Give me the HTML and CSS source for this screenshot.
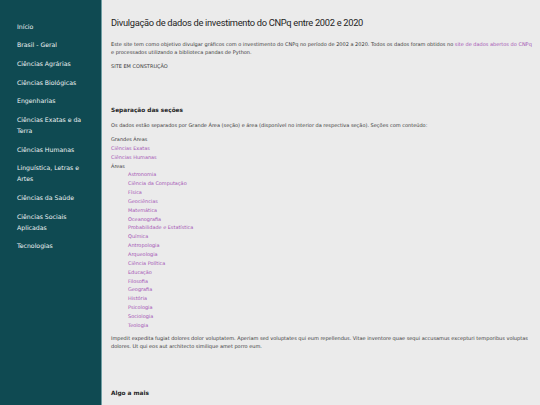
FILE: index.html
```html
<!DOCTYPE html>
<html lang="pt-BR">
<head>
<meta charset="utf-8">
<title>CNPq</title>
<link rel="stylesheet" href="styles.css">
</head>
<body>
<aside class="sidebar">
  <ul class="nav">
    <li>Início</li>
    <li>Brasil - Geral</li>
    <li>Ciências Agrárias</li>
    <li>Ciências Biológicas</li>
    <li>Engenharias</li>
    <li>Ciências Exatas e da Terra</li>
    <li>Ciências Humanas</li>
    <li>Linguística, Letras e Artes</li>
    <li>Ciências da Saúde</li>
    <li>Ciências Sociais Aplicadas</li>
    <li>Tecnologias</li>
  </ul>
</aside>
<main class="content">
  <h1 class="title">Divulgação de dados de investimento do CNPq entre 2002 e 2020</h1>
  <p class="text">Este site tem como objetivo divulgar gráficos com o investimento do CNPq no período de 2002 a 2020. Todos os dados foram obtidos no <a class="link nowrap" href="#">site de dados abertos do CNPq</a><br>e processados utilizando a biblioteca pandas de Python.</p>
  <p class="text">SITE EM CONSTRUÇÃO</p>

  <h2 class="section-title">Separação das seções</h2>
  <p class="text">Os dados estão separados por Grande Área (seção) e área (disponível no interior da respectiva seção). Seções com conteúdo:</p>
  <ul class="tree">
    <li class="tree-head">Grandes Áreas</li>
    <li><a class="link" href="#">Ciências Exatas</a></li>
    <li><a class="link" href="#">Ciências Humanas</a></li>
    <li class="tree-head">Áreas
      <ul class="subtree">
        <li><a class="link" href="#">Astronomia</a></li>
        <li><a class="link" href="#">Ciência da Computação</a></li>
        <li><a class="link" href="#">Física</a></li>
        <li><a class="link" href="#">Geociências</a></li>
        <li><a class="link" href="#">Matemática</a></li>
        <li><a class="link" href="#">Oceanografia</a></li>
        <li><a class="link" href="#">Probabilidade e Estatística</a></li>
        <li><a class="link" href="#">Química</a></li>
        <li><a class="link" href="#">Antropologia</a></li>
        <li><a class="link" href="#">Arqueologia</a></li>
        <li><a class="link" href="#">Ciência Política</a></li>
        <li><a class="link" href="#">Educação</a></li>
        <li><a class="link" href="#">Filosofia</a></li>
        <li><a class="link" href="#">Geografia</a></li>
        <li><a class="link" href="#">História</a></li>
        <li><a class="link" href="#">Psicologia</a></li>
        <li><a class="link" href="#">Sociologia</a></li>
        <li><a class="link" href="#">Teologia</a></li>
      </ul>
    </li>
  </ul>
  <p class="text">Impedit expedita fugiat dolores dolor voluptatem. Aperiam sed voluptates qui eum repellendus. Vitae inventore quae sequi accusamus excepturi temporibus voluptas dolores. Ut qui eos aut architecto similique amet porro eum.</p>

  <h2 class="section-title more">Algo a mais</h2>
</main>
</body>
</html>
```

FILE: styles.css
```css
* { box-sizing: border-box; }
html, body { margin: 0; padding: 0; }
body {
  display: flex;
  min-height: 100vh;
  background: #ebebeb;
  font-family: "DejaVu Sans", sans-serif;
  color: #333;
}
.sidebar {
  flex: 0 0 102px;
  background: #0f4a52;
  border-right: 1px solid #6f9fa4;
  padding-top: 17px;
}
.nav {
  list-style: none;
  margin: 0;
  padding: 0;
}
.nav li {
  color: #eef2f2;
  font-size: 6.2px;
  line-height: 11px;
  padding: 3.5px 17px 4.2px;
}
.content {
  flex: 1;
  padding: 16px 3px 0 9px;
  min-width: 0;
}
.title {
  margin: 0 0 11px;
  font-family: "Roboto", sans-serif;
  font-size: 9.3px;
  letter-spacing: -0.3px;
  font-weight: normal;
  color: #1e1e1e;
  line-height: 13px;
}
.text {
  margin: 0 0 6px;
  font-size: 5px;
  line-height: 8px;
  color: #3a3a3a;
}
.link { color: #a453b4; text-decoration: none; }
.nowrap { white-space: nowrap; }
.section-title {
  margin: 36px 0 6px;
  font-size: 5.8px;
  font-weight: 600;
  color: #1e1e1e;
  line-height: 9px;
}
.section-title.more { margin-top: 39px; }
.tree {
  list-style: none;
  margin: 0 0 4px;
  padding: 0;
  font-size: 4.95px;
  line-height: 8.85px;
  color: #3a3a3a;
}
.subtree {
  list-style: none;
  margin: 0;
  padding: 0 0 0 17px;
}
```
